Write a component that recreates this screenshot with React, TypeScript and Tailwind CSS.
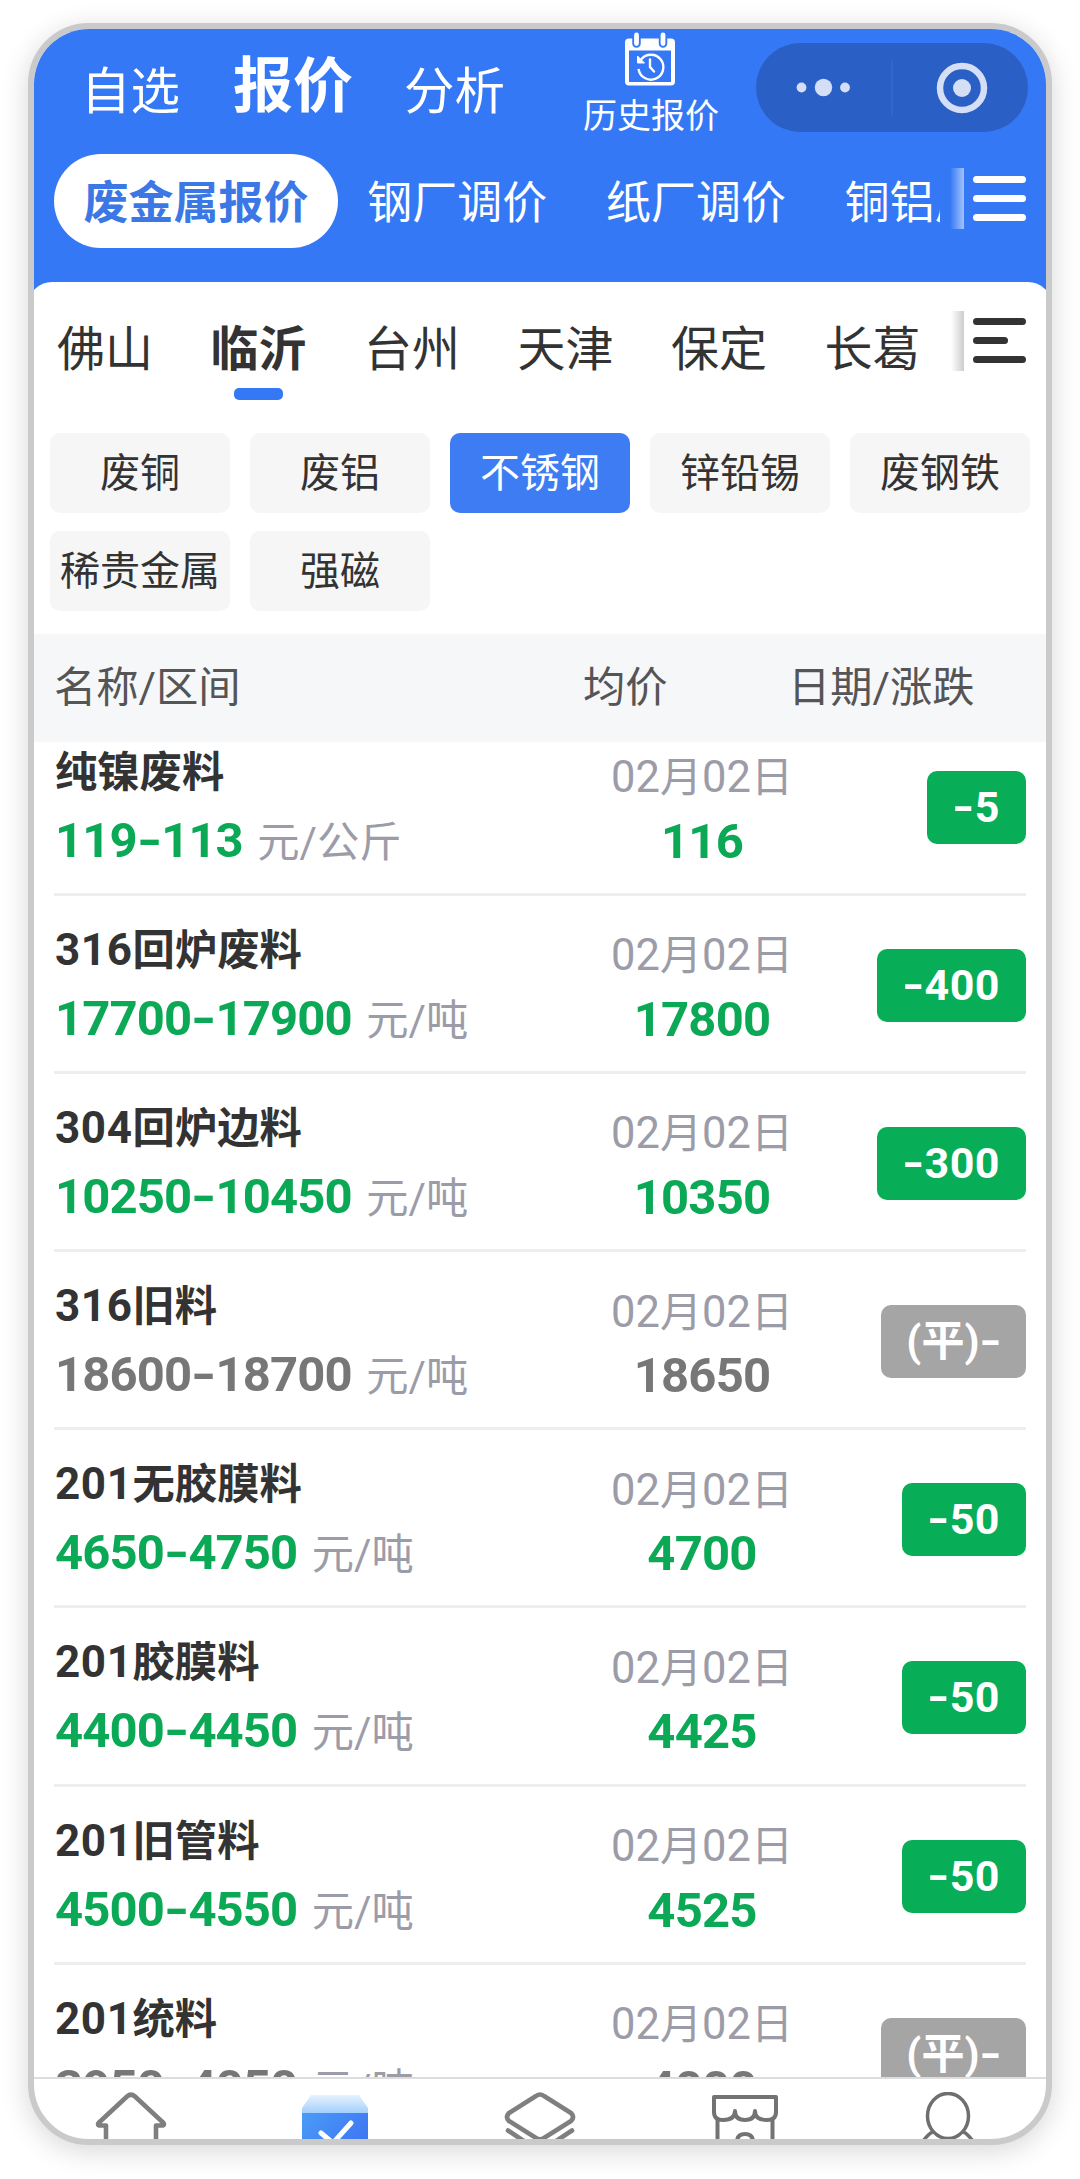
import React, { useState } from 'react';
import clsx from 'clsx';

type Quote = {
    code: string;
    name: string;
    range: string;
    unit: string;
    average: string;
    change: string;
    flat?: boolean;
};

const markets = ['废金属报价', '钢厂调价', '纸厂调价', '铜铝厂调价'];
const cities = ['佛山', '临沂', '台州', '天津', '保定', '长葛'];
const categories = ['废铜', '废铝', '不锈钢', '锌铅锡', '废钢铁', '稀贵金属', '强磁'];

const quotes: Quote[] = [
    { code: '', name: '纯镍废料', range: '119-113', unit: '元/公斤', average: '116', change: '-5' },
    { code: '316', name: '回炉废料', range: '17700-17900', unit: '元/吨', average: '17800', change: '-400' },
    { code: '304', name: '回炉边料', range: '10250-10450', unit: '元/吨', average: '10350', change: '-300' },
    { code: '316', name: '旧料', range: '18600-18700', unit: '元/吨', average: '18650', change: '(平)-', flat: true },
    { code: '201', name: '无胶膜料', range: '4650-4750', unit: '元/吨', average: '4700', change: '-50' },
    { code: '201', name: '胶膜料', range: '4400-4450', unit: '元/吨', average: '4425', change: '-50' },
    { code: '201', name: '旧管料', range: '4500-4550', unit: '元/吨', average: '4525', change: '-50' },
    { code: '201', name: '统料', range: '3950-4050', unit: '元/吨', average: '4000', change: '(平)-', flat: true },
];

const CalendarIcon = () => (
    <svg className="-ml-[3px]" width="52" height="56" viewBox="0 0 52 56" fill="none">
        <path d="M1 11.500a4 4 0 0 1 4-4h42a4 4 0 0 1 4 4v39a4 4 0 0 1-4 4H5a4 4 0 0 1-4-4Z" fill="#fff" />
        <path d="M5 19.500h42v31.500H5Z" fill="#3478f6" />
        <path d="M12.500 4v8.500M39 4v8.500" stroke="#3478f6" strokeWidth="8.500" strokeLinecap="round" />
        <path d="M12.500 4v8.500M39 4v8.500" stroke="#fff" strokeWidth="4.800" strokeLinecap="round" />
        <path d="M17 28.500a12.500 12.500 0 1 1-2.500 9.500" stroke="#fff" strokeWidth="2.400" />
        <path d="M13.500 25v7h7Z" fill="#fff" stroke="#fff" />
        <path d="M26 28.500v7.500l4 4.500" stroke="#fff" strokeWidth="2.400" strokeLinecap="round" />
    </svg>
);

const MenuIcon = ({ short }: { short?: boolean }) => (
    <svg width="53" height="45" viewBox="0 0 53 45" fill="none" stroke="currentColor" strokeWidth="7" strokeLinecap="round">
        <path d="M3.500 3.500h46M3.500 41.500h46" />
        <path d={short ? 'M3.500 22.500h28' : 'M3.500 22.500h46'} />
    </svg>
);

const Capsule = () => (
    <svg width="272" height="89" viewBox="0 0 272 89" fill="none">
        <rect width="272" height="89" rx="44.500" fill="#2a5fc6" />
        <path d="M136 17v56" stroke="#346acf" strokeWidth="1.500" />
        <g fill="#d4dff6">
            <circle cx="45.500" cy="44.500" r="4.900" />
            <circle cx="67.500" cy="44.500" r="8.700" />
            <circle cx="89" cy="44.500" r="4.900" />
            <circle cx="206" cy="45" r="9" />
        </g>
        <circle cx="206" cy="45" r="22" stroke="#d4dff6" strokeWidth="6.500" />
    </svg>
);

// The dash of the price font is wider than Roboto's, so it gets its own box
const Figure = ({ value }: { value: string }) => (
    <>
        {value.split('').map((char, i) =>
            char === '-' ? (
                <span key={i} className="inline-block w-[0.5em] scale-x-[1.35] text-center">-</span>
            ) : (
                <span key={i}>{char}</span>
            )
        )}
    </>
);

const QuoteRow = ({ quote }: { quote: Quote }) => {
    const tone = quote.flat ? 'text-[#777777]' : 'text-[#0ba856]';

    return (
        <div className="flex h-[178.15px] shrink-0 items-start border-b-[3px] border-[#eeeeef]">
            <div className="w-[548px] whitespace-nowrap pl-px pt-[19px]">
                <div className="flex h-[68px] items-baseline text-[42.3px] font-bold leading-[71px] text-[#333333]">
                    {quote.code && <span className="text-[44px] tracking-[0.6px]">{quote.code}</span>}
                    <span>{quote.name}</span>
                </div>
                <div className="flex h-[71px] items-baseline leading-[71px]">
                    <span className={clsx('text-[49px] font-bold tracking-[-0.9px]', tone)}>
                        <Figure value={quote.range} />
                    </span>
                    <span className="ml-[14.5px] text-[42.3px] text-[#9c9ca9]">{quote.unit}</span>
                </div>
            </div>
            <div className="flex w-[200px] flex-col items-center pt-[27.5px]">
                <div className="h-[63.5px] whitespace-nowrap text-[42px] leading-[65px] text-[#9c9ca9]">
                    <span className="text-[43.500px]">02</span>月<span className="text-[43.500px]">02</span>日
                </div>
                <div className={clsx('h-[65px] text-[49px] font-bold leading-[65px] tracking-[-0.8px]', tone)}>{quote.average}</div>
            </div>
            <div className="flex h-full flex-1 items-center justify-end pt-1">
                <span
                    className={clsx(
                        'h-[73px] whitespace-nowrap rounded-[10px] text-[43px] font-bold leading-[73px] text-white',
                        quote.flat ? 'bg-[#a5a5a5] px-[25px]' : 'bg-[#08ad57] px-[26px] tracking-[0.5px]'
                    )}
                >
                    <Figure value={quote.change} />
                </span>
            </div>
        </div>
    );
};

const App = () => {
    const [category, setCategory] = useState('不锈钢');
    const [city, setCity] = useState('临沂');

    return (
        <div className="h-[2179px] w-[1080px] bg-white px-7 pt-[23px] font-[Roboto,'Noto_Sans_CJK_SC',sans-serif]">
            <div className="flex h-[2122px] flex-col overflow-hidden rounded-[61px] border-[6px] border-[#cbcaca] bg-white shadow-[0_6px_28px_rgba(0,0,0,0.16)]">
                <header className="-mb-[30px] h-[283px] shrink-0 bg-[#3478f6] text-white">
                    <div className="flex h-[125px] items-start pl-[47px] pr-[18px]">
                        <span className="mt-[27px] w-[152px] text-[49.5px] leading-[72px]">自选</span>
                        <span className="mt-[22px] w-[171px] text-[60px] font-bold leading-[72px]">报价</span>
                        <span className="mt-[27px] w-[179px] text-[50.5px] leading-[72px]">分析</span>
                        <div className="flex w-[136px] flex-col items-center pt-[2px]">
                            <CalendarIcon />
                            <span className="text-[34px] leading-[58px]">历史报价</span>
                        </div>
                        <div className="ml-auto pt-[14px]">
                            <Capsule />
                        </div>
                    </div>
                    <div className="flex h-[94px] items-start pl-5">
                        <div className="flex h-[94px] w-[886px] items-start gap-[58.7px] overflow-hidden whitespace-nowrap text-[45px] leading-[99px]">
                            {markets.map((market, i) => (
                                <span key={market} className={i === 0 ? '-mr-[29.5px] h-[94px] shrink-0 rounded-full bg-white px-[29.5px] font-bold text-[#3b78e6]' : 'shrink-0'}>
                                    {market}
                                </span>
                            ))}
                        </div>
                        <div className="ml-[10px] mr-[9px] mt-[14px] h-[61px] w-[14px] bg-gradient-to-r from-transparent to-white/55" />
                        <div className="pt-[22px]">
                            <MenuIcon />
                        </div>
                    </div>
                </header>

                <div className="-mx-[6px] h-[352px] shrink-0 rounded-t-[24px] bg-white px-[6px] text-[#333333]">
                    <div className="flex h-[151px] items-start pl-[23px]">
                        <div className="flex w-[884px] gap-[57.5px] pt-[32.5px] text-[48px] leading-[70px]">
                            {cities.map((name) => (
                                <button key={name} onClick={() => setCity(name)} className={clsx('flex w-24 shrink-0 flex-col items-center', city === name && 'font-bold')}>
                                    {name}
                                    {city === name && <span className="mt-[3.5px] h-3 w-[49px] rounded-[5px] bg-[#3478f6]" />}
                                </button>
                            ))}
                        </div>
                        <div className="ml-[10px] mr-[9px] mt-[29px] h-[60px] w-[13px] bg-gradient-to-r from-transparent to-black/20" />
                        <div className="pt-9">
                            <MenuIcon short />
                        </div>
                    </div>
                    <div className="grid grid-cols-[repeat(5,180px)] gap-x-5 gap-y-[18px] pl-4">
                        {categories.map((name) => (
                            <button
                                key={name}
                                onClick={() => setCategory(name)}
                                className={clsx('h-20 whitespace-nowrap rounded-[10px] pt-[2px] text-[40px] leading-[78px]', category === name ? 'bg-[#3d7cf3] text-white' : 'bg-[#f6f6f6]')}
                            >
                                {name}
                            </button>
                        ))}
                    </div>
                </div>

                <div className="flex h-[108px] shrink-0 bg-[#f6f7f9] pl-[20px] text-[42.3px] leading-[108px] text-[#555555]">
                    <span className="w-[529px]">名称/区间</span>
                    <span className="w-[205px]">均价</span>
                    <span>日期/涨跌</span>
                </div>

                <div className="flex min-h-0 flex-1 flex-col overflow-hidden px-5">
                    <div className="-mt-[24.3px] flex flex-col">
                        {quotes.map((quote, i) => (
                            <QuoteRow key={i} quote={quote} />
                        ))}
                    </div>
                </div>

                <nav className="-mx-[5.5px] grid h-[62px] shrink-0 grid-cols-5 items-start justify-items-center overflow-hidden border-t-2 border-[#dddddd]">
                    <svg className="mt-[13px]" width="72" height="70" viewBox="0 0 72 70" fill="none" stroke="#7f7f7f" strokeWidth="4.600" strokeLinejoin="round">
                        <path d="M11 70V33.500H4q-2-1 0-3L32 4.500q4-3.500 8 0l28 26q2 2 0 3h-7V70" />
                    </svg>
                    <svg className="mt-[16px]" width="68" height="70" viewBox="0 0 68 70" fill="none">
                        <defs>
                            <linearGradient id="lid" x1="0" y1="0" x2="0" y2="1">
                                <stop stopColor="#e6f2fe" />
                                <stop offset="1" stopColor="#9fcdfb" />
                            </linearGradient>
                            <linearGradient id="box" x1="0" y1="0" x2="1" y2="0.700">
                                <stop stopColor="#4a9cf7" />
                                <stop offset="1" stopColor="#3c72f2" />
                            </linearGradient>
                        </defs>
                        <path d="M10 0h48l9 13v6H1v-6Z" fill="url(#lid)" />
                        <path d="M1 18h66v52H1Z" fill="url(#box)" />
                        <path d="m20 38 12 10 18-20" stroke="#fff" strokeWidth="5" strokeLinecap="round" strokeLinejoin="round" />
                    </svg>
                    <svg className="mt-[13px]" width="72" height="70" viewBox="0 0 72 70" fill="none" stroke="#7f7f7f" strokeWidth="4.600" strokeLinecap="round" strokeLinejoin="round">
                        <path d="M32 4q4-3 8 0l27 17q4 4 0 8L40 46q-4 2.500-8 0L5 29q-4-4 0-8Z" />
                        <path d="m4 38.500 28 18.500q4 2 8 0l28-18.500" />
                    </svg>
                    <svg className="mt-[16px]" width="68" height="70" viewBox="0 0 68 70" fill="none" stroke="#737373" strokeWidth="4" strokeLinecap="round" strokeLinejoin="round">
                        <path d="M3 2h62v15q0 8-9 8-12 0-12-9 0 9-10 9t-10-9q0 9-12 9-9 0-9-8Z" />
                        <path d="M6.500 24v46M61.500 24v46M26 47q0-8 8-8t8 8" />
                    </svg>
                    <svg className="mt-[13px]" width="60" height="70" viewBox="0 0 60 70" fill="none" stroke="#6f6f6f" strokeWidth="3.500">
                        <ellipse cx="29" cy="24" rx="20.500" ry="22.500" />
                        <path d="M15 39Q5 44 0 58M43 39q10 5 15 19" />
                    </svg>
                </nav>
            </div>
        </div>
    );
};

export default App;
